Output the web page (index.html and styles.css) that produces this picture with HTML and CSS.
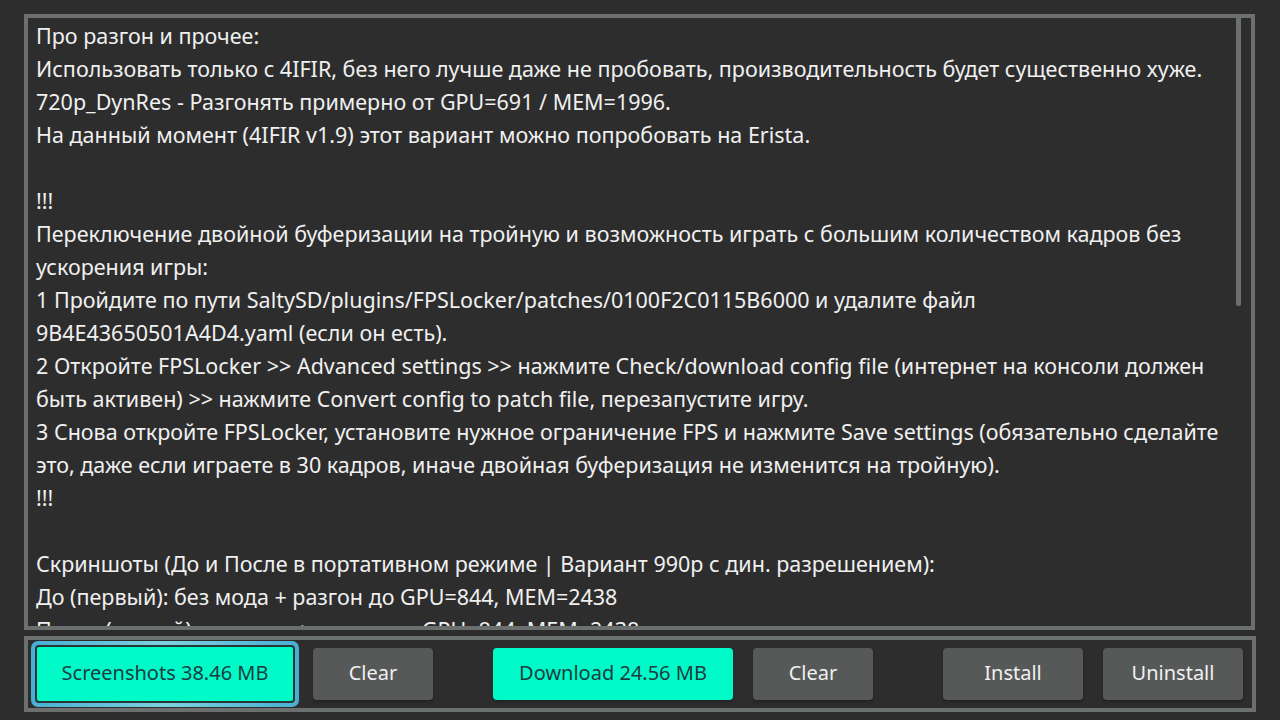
FILE: index.html
```html
<!DOCTYPE html>
<html lang="ru">
<head>
<meta charset="utf-8">
<title>Mod info</title>
<link rel="stylesheet" href="styles.css">
</head>
<body>
<div class="app">
  <div class="text-panel">
    <div class="text-body">
      <p>Про разгон и прочее:</p>
      <p>Использовать только с 4IFIR, без него лучше даже не пробовать, производительность будет существенно хуже.</p>
      <p>720p_DynRes - Разгонять примерно от GPU=691 / MEM=1996.</p>
      <p>На данный момент (4IFIR v1.9) этот вариант можно попробовать на Erista.</p>
      <p>&nbsp;</p>
      <p>!!!</p>
      <p>Переключение двойной буферизации на тройную и возможность играть с большим количеством кадров без ускорения игры:</p>
      <p>1 Пройдите по пути SaltySD/plugins/FPSLocker/patches/0100F2C0115B6000 и удалите файл 9B4E43650501A4D4.yaml (если он есть).</p>
      <p>2 Откройте FPSLocker &gt;&gt; Advanced settings &gt;&gt; нажмите Check/download config file (интернет на консоли должен быть активен) &gt;&gt; нажмите Convert config to patch file, перезапустите игру.</p>
      <p>3 Снова откройте FPSLocker, установите нужное ограничение FPS и нажмите Save settings (обязательно сделайте это, даже если играете в 30 кадров, иначе двойная буферизация не изменится на тройную).</p>
      <p>!!!</p>
      <p>&nbsp;</p>
      <p>Скриншоты (До и После в портативном режиме | Вариант 990p с дин. разрешением):</p>
      <p>До (первый): без мода + разгон до GPU=844, MEM=2438</p>
      <p>После (второй): с модом + разгон до GPU=844, MEM=2438</p>
    </div>
    <div class="scrollbar"></div>
  </div>
  <div class="button-panel">
    <div class="focus-ring">
      <button class="btn btn-primary btn-focused">Screenshots 38.46 MB</button>
    </div>
    <button class="btn btn-secondary btn-clear1">Clear</button>
    <button class="btn btn-primary btn-download">Download 24.56 MB</button>
    <button class="btn btn-secondary btn-clear2">Clear</button>
    <button class="btn btn-secondary btn-install">Install</button>
    <button class="btn btn-secondary btn-uninstall">Uninstall</button>
  </div>
</div>
</body>
</html>
```

FILE: styles.css
```css
* { box-sizing: border-box; }
html, body {
  margin: 0;
  padding: 0;
  width: 1280px;
  height: 720px;
  background: #2d2d2d;
  overflow: hidden;
  font-family: "Noto Sans", "Open Sans", sans-serif;
}
.app {
  padding: 14px 24px 0 24px;
  display: flex;
  flex-direction: column;
}
.text-panel {
  position: relative;
  width: 1231px;
  height: 616px;
  border: 4px solid #6b706e;
  overflow: hidden;
}
.text-body {
  padding: 1px 20px 0 8px;
  color: #f0f0f0;
  font-size: 21.5px;
  line-height: 33px;
}
.text-body p {
  margin: 0;
}
.scrollbar {
  position: absolute;
  top: -2px;
  right: 10px;
  width: 5px;
  height: 290px;
  background: #6b706e;
  border-radius: 2px;
}
.button-panel {
  margin-top: 6px;
  width: 1232px;
  height: 76px;
  border: 4px solid #6b706e;
  display: flex;
  align-items: center;
}
.focus-ring {
  margin-left: 3px;
  width: 268px;
  height: 66px;
  border-radius: 7px;
  padding: 4px;
  background: linear-gradient(90deg, #48aed3, #7ed2e0 50%, #48aed3);
  display: flex;
}
.focus-ring .btn {
  flex: 1;
  height: 100%;
  border: 2px solid #263634;
  border-radius: 4px;
}
.btn {
  height: 52px;
  border: none;
  border-radius: 4px;
  font-family: "Noto Sans", "Open Sans", sans-serif;
  font-size: 20px;
  padding: 0 0 3px 0;
  box-shadow: 0 2px 3px rgba(0, 0, 0, 0.25);
}
.btn-primary {
  background: #00fbc8;
  color: #1e3c40;
}
.btn-secondary {
  background: #565958;
  color: #f0f0f0;
}
.btn-focused { box-shadow: none; }
.btn-clear1 { margin-left: 14px; width: 120px; }
.btn-download { margin-left: 60px; width: 240px; }
.btn-clear2 { margin-left: 20px; width: 120px; }
.btn-install { margin-left: 70px; width: 140px; }
.btn-uninstall { margin-left: 20px; width: 140px; }
```
